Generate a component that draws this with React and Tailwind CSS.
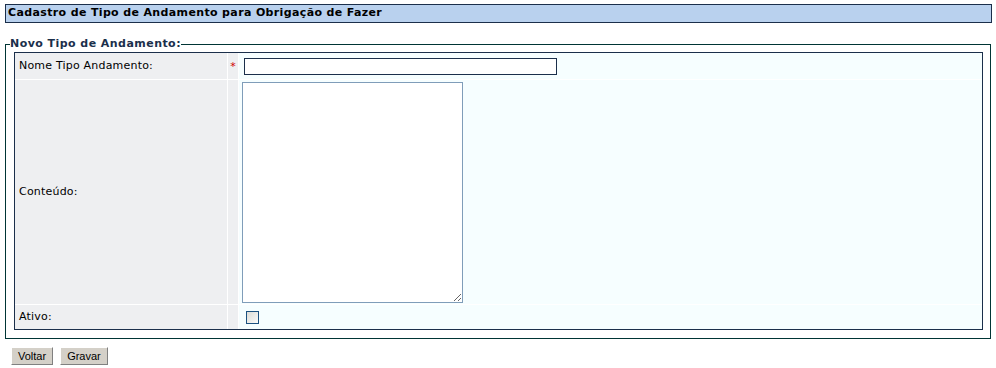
import React from 'react';

const verdana = { fontFamily: '"DejaVu Sans", Verdana, sans-serif' };

function LabelCell({ children }) {
  return (
    <div className="bg-[#eeeff1] flex items-center pl-[4px] text-[11px] tracking-[0.2px] text-black">
      {children}
    </div>
  );
}

function MarkCell({ children }) {
  return <div className="bg-[#eeeff1] flex items-start justify-center pt-[6px] text-[11px] text-[#d00000]">{children}</div>;
}

function XpButton({ children }) {
  return (
    <button
      className="h-[18px] px-[6px] bg-[#d4d0c8] text-[11px] leading-none text-black border border-t-white border-l-white border-r-[#808080] border-b-[#808080]"
      style={{ fontFamily: '"Liberation Sans", Arial, sans-serif' }}
    >
      {children}
    </button>
  );
}

export default function App() {
  return (
    <div className="w-[996px] h-[368px] bg-white pt-[4px]" style={verdana}>
      {/* Title bar */}
      <div className="ml-[5px] mr-[4px] h-[19px] bg-[#b9d1ee] border border-[#1b2f4b] flex items-center pl-[2px]">
        <span className="text-[11px] font-bold tracking-[0.36px] text-black">
          Cadastro de Tipo de Andamento para Obrigação de Fazer
        </span>
      </div>

      {/* Fieldset */}
      <fieldset className="mx-[5px] mt-[14px] border border-[#003535] px-[4px] pb-[8px]">
        <legend className="px-0 text-[11px] font-bold tracking-[0.45px] text-[#1b2f4b] leading-[14px]">
          Novo Tipo de Andamento:
        </legend>
        <div className="mt-[1px] mx-[4px] mr-[3px] border border-[#1b2f4b] bg-white">
          <div className="grid grid-cols-[212px_10px_1fr] grid-rows-[26px_224px_24px] gap-px">
            <LabelCell>Nome Tipo Andamento:</LabelCell>
            <MarkCell>*</MarkCell>
            <div className="bg-[#f6feff] flex items-center pl-[5px]">
              <input
                type="text"
                className="w-[313px] h-[17px] border border-[#1b2f4b] bg-white outline-none"
              />
            </div>

            <LabelCell>Conteúdo:</LabelCell>
            <MarkCell />
            <div className="bg-[#f6feff] pl-[3px] pt-[2px]">
              <textarea className="block w-[221px] h-[221px] border border-[#7f9db9] bg-white outline-none resize" />
            </div>

            <LabelCell>Ativo:</LabelCell>
            <MarkCell />
            <div className="bg-[#f6feff] flex items-center pl-[7px]">
              <span className="block w-[13px] h-[13px] border border-[#1c5180] bg-gradient-to-br from-[#dcdcd7] to-[#fbfbfa]" />
            </div>
          </div>
        </div>
      </fieldset>

      {/* Buttons */}
      <div className="flex gap-[7px] ml-[11px] mt-[8px]">
        <XpButton>Voltar</XpButton>
        <XpButton>Gravar</XpButton>
      </div>
    </div>
  );
}
